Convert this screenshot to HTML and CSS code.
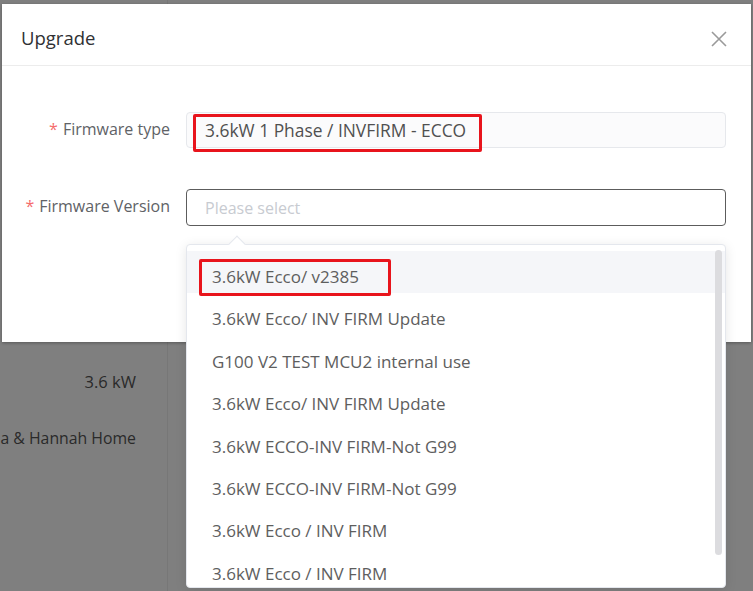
FILE: index.html
```html
<!DOCTYPE html>
<html>
<head>
<meta charset="utf-8">
<link rel="stylesheet" href="styles.css">
</head>
<body>
<div class="page">
  <div class="bg-col">
    <div class="bg-row">3.6 kW</div>
    <div class="bg-row">a &amp; Hannah Home</div>
  </div>
</div>

<div class="modal">
  <div class="modal-header">
    <span class="modal-title">Upgrade</span>
    <svg class="close" width="16" height="16" viewBox="0 0 16 16"><path d="M1 1L15 15M15 1L1 15" stroke="#9a9a9a" stroke-width="1.6" fill="none"/></svg>
  </div>
  <div class="modal-body">
    <div class="form-item">
      <label class="form-label"><span class="req">*</span>Firmware type</label>
      <div class="input disabled">
        <span>3.6kW 1 Phase / INVFIRM - ECCO</span>
        <span class="mark mark-type"></span>
      </div>
    </div>
    <div class="form-item">
      <label class="form-label"><span class="req">*</span>Firmware Version</label>
      <div class="select-wrap">
        <div class="input focused"><span class="placeholder">Please select</span></div>
        <div class="dropdown">
          <span class="arrow"></span>
          <ul class="options">
            <li class="hover">3.6kW Ecco/ v2385<span class="mark mark-opt"></span></li>
            <li>3.6kW Ecco/ INV FIRM Update</li>
            <li>G100 V2 TEST MCU2 internal use</li>
            <li>3.6kW Ecco/ INV FIRM Update</li>
            <li>3.6kW ECCO-INV FIRM-Not G99</li>
            <li>3.6kW ECCO-INV FIRM-Not G99</li>
            <li>3.6kW Ecco / INV FIRM</li>
            <li>3.6kW Ecco / INV FIRM</li>
          </ul>
          <span class="scrollbar"></span>
        </div>
      </div>
    </div>
  </div>
</div>
</body>
</html>
```
FILE: styles.css
```css
html, body {
  margin: 0;
  padding: 0;
  width: 753px;
  height: 591px;
  overflow: hidden;
}
body {
  background: #7f7f7f;
  font-family: "Open Sans", "Noto Sans", sans-serif;
  position: relative;
}
.page {
  display: flex;
  height: 591px;
}
.bg-col {
  width: 168px;
  border-right: 1px solid #777;
  box-sizing: border-box;
  padding-top: 370px;
  padding-right: 31px;
}
.bg-row {
  display: flex;
  justify-content: flex-end;
  white-space: nowrap;
  height: 57px;
  font-size: 16.5px;
  color: #2a2a2a;
}
.bg-row + .bg-row {
  font-size: 15.8px;
}
.modal {
  position: absolute;
  top: 4px;
  left: 2px;
  width: 749px;
  height: 338px;
  background: #fff;
  box-shadow: 0 1px 3px rgba(0,0,0,.3);
}
.modal-header {
  height: 62px;
  box-sizing: border-box;
  border-bottom: 1px solid #ececec;
  padding: 19px 24px 0 19px;
  display: flex;
  justify-content: space-between;
  align-items: flex-start;
}
.modal-title {
  font-size: 18.5px;
  line-height: 30px;
  color: #303133;
}
.close {
  margin-top: 8px;
}
.modal-body {
  padding: 46px 25px 0 0;
}
.form-item {
  display: flex;
  margin-bottom: 41px;
}
.form-label {
  width: 184px;
  box-sizing: border-box;
  padding-right: 16px;
  text-align: right;
  font-size: 16px;
  line-height: 34px;
  color: #606266;
  white-space: nowrap;
}
.req {
  color: #f56c6c;
  margin-right: 5px;
}
.input {
  position: relative;
  width: 540px;
  height: 36px;
  box-sizing: border-box;
  border: 1px solid #e6e8ec;
  border-radius: 4px;
  padding-left: 18px;
  display: flex;
  align-items: center;
  font-size: 17.4px;
  color: #505050;
}
.input.disabled {
  background: #fbfbfc;
}
.input.focused {
  border-color: #5c5c5c;
  height: 37px;
}
.placeholder {
  color: #c8cbd1;
  font-size: 16px;
}
.mark {
  position: absolute;
  border: 3px solid #e8141c;
  border-radius: 2px;
  box-sizing: border-box;
}
.mark-type {
  left: 6px;
  top: 1px;
  width: 289px;
  height: 38px;
}
.select-wrap {
  position: relative;
}
.dropdown {
  position: absolute;
  left: 0;
  top: 55px;
  width: 540px;
  height: 344px;
  box-sizing: border-box;
  background: #fff;
  border: 1px solid #e4e7ed;
  border-radius: 4px;
  box-shadow: 0 2px 12px rgba(0,0,0,.1);
}
.arrow {
  position: absolute;
  left: 44px;
  top: -7px;
  width: 11px;
  height: 11px;
  background: #fff;
  border-top: 1px solid #e4e7ed;
  border-left: 1px solid #e4e7ed;
  transform: rotate(45deg);
}
.options {
  list-style: none;
  margin: 0;
  padding: 6px 0 0;
  height: 342px;
  overflow: hidden;
  border-radius: 4px;
}
.options li {
  position: relative;
  height: 42.4px;
  line-height: 52px;
  padding-left: 25px;
  font-size: 17px;
  color: #5e5e5e;
  white-space: nowrap;
}
.options li.hover {
  background: #f5f6f9;
}
.mark-opt {
  left: 12px;
  top: 8px;
  width: 192px;
  height: 37px;
}
.scrollbar {
  position: absolute;
  right: 3px;
  top: 5px;
  width: 7px;
  height: 305px;
  border-radius: 4px;
  background: #dcdcdf;
}
```
